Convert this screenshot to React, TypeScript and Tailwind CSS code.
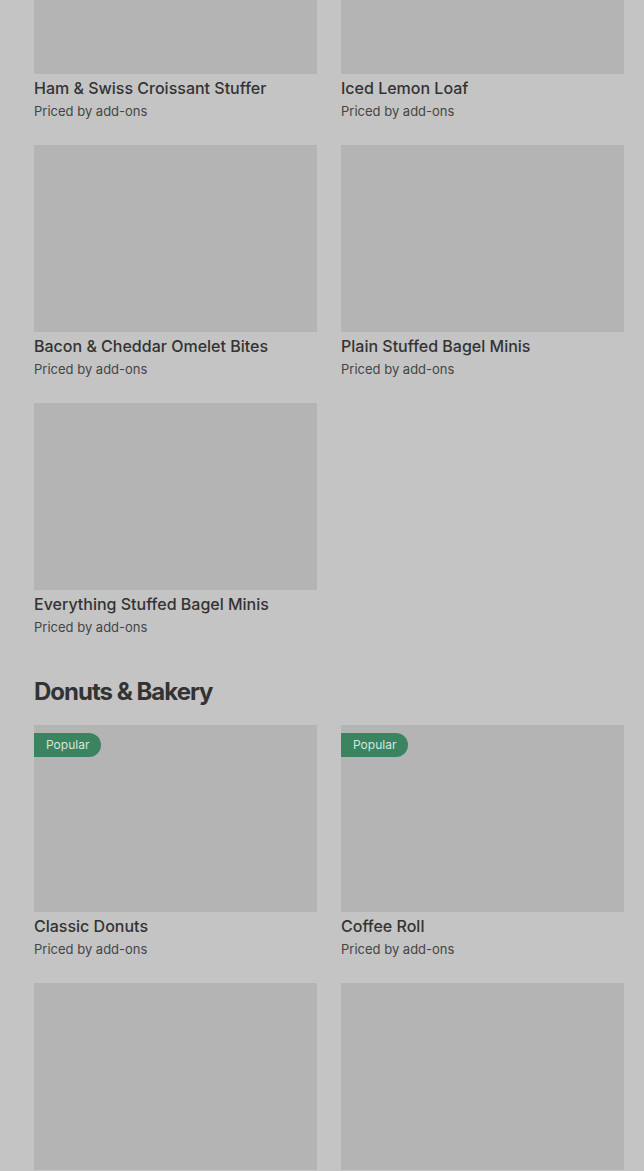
import React from "react";

type Item = { name?: string; popular?: boolean };

const Card = ({ item }: { item: Item }) => (
  <div className="flex flex-col">
    <div className="relative h-[187px] bg-[#b4b4b4]">
      {item.popular && (
        <div className="absolute left-0 top-[8px] flex h-[24px] items-center rounded-r-full bg-[#3b8462] pl-[12px] pr-[12px] text-[12px] leading-none text-[#d6e6dc]">
          Popular
        </div>
      )}
    </div>
    {item.name && (
      <>
        <div className="pt-[2px] text-[16px] font-medium leading-6 text-[#333333]">{item.name}</div>
        <div className="pt-px text-[13px] leading-5 text-[#454545]">Priced by add-ons</div>
      </>
    )}
  </div>
);

const Grid = ({ items }: { items: Item[] }) => (
  <div className="grid grid-cols-2 gap-x-[24px] gap-y-[24px]">
    {items.map((it, i) => (
      <Card key={i} item={it} />
    ))}
  </div>
);

export default function App() {
  return (
    <div
      className="h-[1171px] overflow-hidden bg-[#c4c4c4]"
      style={{ fontFamily: "Inter, Roboto, 'Liberation Sans', sans-serif" }}
    >
      <div className="-mt-[113px] pl-[34px] pr-[20px]">
        <Grid
          items={[
            { name: "Ham & Swiss Croissant Stuffer" },
            { name: "Iced Lemon Loaf" },
            { name: "Bacon & Cheddar Omelet Bites" },
            { name: "Plain Stuffed Bagel Minis" },
            { name: "Everything Stuffed Bagel Minis" },
          ]}
        />
        <h2 className="mt-[39px] mb-[17px] text-[24px] font-bold leading-8 tracking-[-1px] text-[#333333]">
          Donuts &amp; Bakery
        </h2>
        <Grid
          items={[
            { name: "Classic Donuts", popular: true },
            { name: "Coffee Roll", popular: true },
            {},
            {},
          ]}
        />
      </div>
    </div>
  );
}
